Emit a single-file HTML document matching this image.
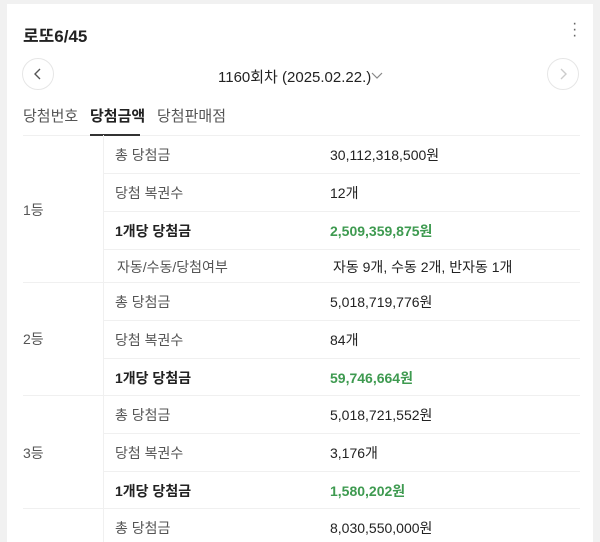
<!DOCTYPE html>
<html><head><meta charset="utf-8"><style>
*{margin:0;padding:0;box-sizing:border-box}
html,body{width:600px;height:542px;overflow:hidden}
body{background:#f1f1f1;font-family:"Liberation Sans","Noto Sans CJK KR",sans-serif;color:#222;position:relative}
.card{position:absolute;left:7px;top:4px;width:586px;height:560px;background:#fff}
.a{position:absolute;white-space:nowrap}
.hl{position:absolute;height:1px;background:#f0f0f0}
.lb{color:#555;font-size:14px}
.v{color:#222;font-size:14px}
.b{font-weight:bold;color:#222}
.g{color:#3e9a50}
.circ{position:absolute;width:32px;height:32px;border-radius:50%;border:1px solid #e6e6e6;background:#fff}
</style></head><body>
<div class="card"></div>
<div class="a" style="left:23px;top:22px;font-size:17px;font-weight:bold">로또6/45</div>
<div class="a" style="left:572px;top:21px;font-size:16px;color:#666;line-height:6px;width:4px;text-align:center">·<br>·<br>·</div>
<div class="circ" style="left:22px;top:58px"></div>
<svg class="a" style="left:22px;top:58px" width="32" height="32"><path d="M18 11 L13 16 L18 21" stroke="#555" stroke-width="1.4" fill="none"/></svg>
<div class="circ" style="left:547px;top:58px"></div>
<svg class="a" style="left:547px;top:58px" width="32" height="32"><path d="M14 11 L19 16 L14 21" stroke="#ccc" stroke-width="1.4" fill="none"/></svg>
<div class="a" style="left:218px;top:66px;font-size:15px">1160회차 (2025.02.22.)</div>
<svg class="a" style="left:370px;top:70px" width="14" height="10"><path d="M2 3 L7 8 L12 3" stroke="#888" stroke-width="1.2" fill="none"/></svg>
<div class="a" style="left:23px;top:105px;font-size:15px;color:#555">당첨번호</div>
<div class="a" style="left:90px;top:105px;font-size:15px;font-weight:bold">당첨금액</div>
<div class="a" style="left:157px;top:105px;font-size:15px;color:#555">당첨판매점</div>
<div class="hl" style="left:23px;top:135px;width:557px"></div>
<div class="a" style="left:90px;top:134px;width:50px;height:2px;background:#333"></div>
<div class="a" style="left:103px;top:135px;width:1px;height:420px;background:#f0f0f0"></div>

<div class="hl" style="left:103px;top:173px;width:477px"></div>
<div class="hl" style="left:103px;top:211px;width:477px"></div>
<div class="hl" style="left:103px;top:249px;width:477px"></div>
<div class="hl" style="left:23px;top:282px;width:557px"></div>
<div class="hl" style="left:103px;top:320px;width:477px"></div>
<div class="hl" style="left:103px;top:358px;width:477px"></div>
<div class="hl" style="left:23px;top:395px;width:557px"></div>
<div class="hl" style="left:103px;top:433px;width:477px"></div>
<div class="hl" style="left:103px;top:471px;width:477px"></div>
<div class="hl" style="left:23px;top:508px;width:557px"></div>

<div class="a lb" style="left:23px;top:200px">1등</div>
<div class="a lb" style="left:23px;top:329px">2등</div>
<div class="a lb" style="left:23px;top:443px">3등</div>

<div class="a lb" style="left:115px;top:145px">총 당첨금</div><div class="a v" style="left:330px;top:145px">30,112,318,500원</div>
<div class="a lb" style="left:115px;top:183px">당첨 복권수</div><div class="a v" style="left:330px;top:183px">12개</div>
<div class="a lb b" style="left:115px;top:221px">1개당 당첨금</div><div class="a v b g" style="left:330px;top:221px">2,509,359,875원</div>
<div class="a lb" style="left:117px;top:257px">자동/수동/당첨여부</div><div class="a v" style="left:333px;top:257px">자동 9개, 수동 2개, 반자동 1개</div>
<div class="a lb" style="left:115px;top:292px">총 당첨금</div><div class="a v" style="left:330px;top:292px">5,018,719,776원</div>
<div class="a lb" style="left:115px;top:330px">당첨 복권수</div><div class="a v" style="left:330px;top:330px">84개</div>
<div class="a lb b" style="left:115px;top:368px">1개당 당첨금</div><div class="a v b g" style="left:330px;top:368px">59,746,664원</div>
<div class="a lb" style="left:115px;top:405px">총 당첨금</div><div class="a v" style="left:330px;top:405px">5,018,721,552원</div>
<div class="a lb" style="left:115px;top:443px">당첨 복권수</div><div class="a v" style="left:330px;top:443px">3,176개</div>
<div class="a lb b" style="left:115px;top:481px">1개당 당첨금</div><div class="a v b g" style="left:330px;top:481px">1,580,202원</div>
<div class="a lb" style="left:115px;top:518px">총 당첨금</div><div class="a v" style="left:330px;top:518px">8,030,550,000원</div>
</body></html>
